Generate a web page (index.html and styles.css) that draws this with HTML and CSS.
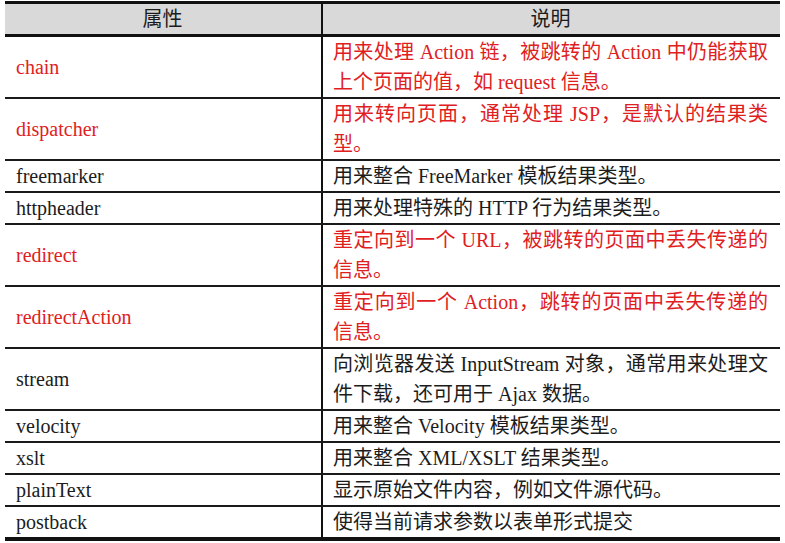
FILE: index.html
```html
<!DOCTYPE html>
<html lang="zh-CN">
<head>
<meta charset="utf-8">
<title>Result 类型</title>
<link rel="stylesheet" href="styles.css">
</head>
<body>
<table class="result-table">
  <colgroup>
    <col class="col-name">
    <col class="col-desc">
  </colgroup>
  <thead>
    <tr>
      <th>属性</th>
      <th>说明</th>
    </tr>
  </thead>
  <tbody>
    <tr class="hl">
      <td>chain</td>
      <td>用来处理 Action 链，被跳转的 Action 中仍能获取上个页面的值，如 request 信息。</td>
    </tr>
    <tr class="hl">
      <td>dispatcher</td>
      <td>用来转向页面，通常处理 JSP，是默认的结果类型。</td>
    </tr>
    <tr>
      <td>freemarker</td>
      <td>用来整合 FreeMarker 模板结果类型。</td>
    </tr>
    <tr>
      <td>httpheader</td>
      <td>用来处理特殊的 HTTP 行为结果类型。</td>
    </tr>
    <tr class="hl">
      <td>redirect</td>
      <td>重定向到一个 URL，被跳转的页面中丢失传递的信息。</td>
    </tr>
    <tr class="hl">
      <td>redirectAction</td>
      <td>重定向到一个 Action，跳转的页面中丢失传递的信息。</td>
    </tr>
    <tr>
      <td>stream</td>
      <td>向浏览器发送 InputStream 对象，通常用来处理文件下载，还可用于 Ajax 数据。</td>
    </tr>
    <tr>
      <td>velocity</td>
      <td>用来整合 Velocity 模板结果类型。</td>
    </tr>
    <tr>
      <td>xslt</td>
      <td>用来整合 XML/XSLT 结果类型。</td>
    </tr>
    <tr>
      <td>plainText</td>
      <td>显示原始文件内容，例如文件源代码。</td>
    </tr>
    <tr>
      <td>postback</td>
      <td>使得当前请求参数以表单形式提交</td>
    </tr>
  </tbody>
</table>
</body>
</html>
```

FILE: styles.css
```css
html, body {
  margin: 0;
  padding: 0;
  background: #ffffff;
}

body {
  padding: 1px 0 0 5px;
  font-family: "Liberation Serif", "Noto Sans CJK SC", serif;
  font-size: 20px;
  color: #1c1c1c;
}

.result-table {
  border-collapse: collapse;
  table-layout: fixed;
  width: 775px;
  border-top: 3px solid #111;
  border-bottom: 4px solid #111;
}

.col-name {
  width: 317px;
}

.col-desc {
  width: 458px;
}

.result-table th,
.result-table td {
  padding: 0 12px 0 11px;
  line-height: 30px;
  border-bottom: 2px solid #1a1a1a;
  vertical-align: middle;
}

.result-table th + th,
.result-table td + td {
  border-left: 2px solid #111;
  padding-left: 10px;
  text-align: justify;
}

.result-table th {
  background: #d9d9d9;
  font-weight: normal;
  text-align: center;
  border-bottom: 3px solid #111;
}

.result-table th + th {
  text-align: center;
}

.result-table tr.hl td {
  color: #e0201e;
}
```
